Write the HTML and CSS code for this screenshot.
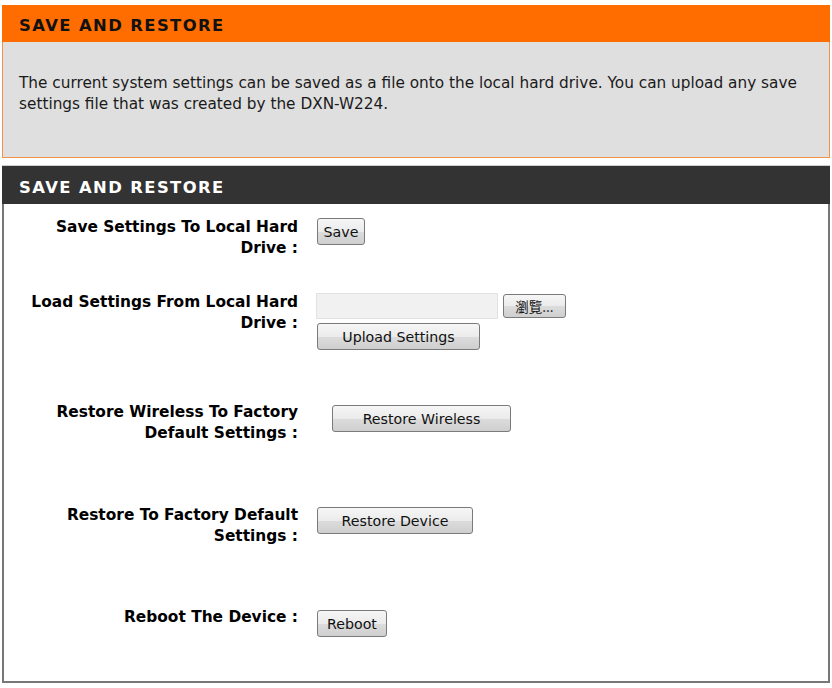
FILE: index.html
```html
<!DOCTYPE html>
<html>
<head>
<meta charset="utf-8">
<link rel="stylesheet" href="styles.css">
</head>
<body>
<div class="page">
  <section class="intro">
    <h1 class="intro-title">SAVE AND RESTORE</h1>
    <div class="intro-body">
      <p>The current system settings can be saved as a file onto the local hard drive. You can upload any save settings file that was created by the DXN-W224.</p>
    </div>
  </section>

  <section class="panel">
    <h2 class="panel-title">SAVE AND RESTORE</h2>
    <div class="panel-body">
      <div class="row row1">
        <div class="label">Save Settings To Local Hard Drive :</div>
        <div class="controls c1"><button class="btn btn-save">Save</button></div>
      </div>
      <div class="row row2">
        <div class="label">Load Settings From Local Hard Drive :</div>
        <div class="controls c2">
          <div class="file-line">
            <input class="file-box" type="text">
            <button class="btn btn-browse">瀏覽...</button>
          </div>
          <button class="btn btn-upload">Upload Settings</button>
        </div>
      </div>
      <div class="row row3">
        <div class="label">Restore Wireless To Factory Default Settings :</div>
        <div class="controls c3"><button class="btn btn-wireless">Restore Wireless</button></div>
      </div>
      <div class="row row4">
        <div class="label">Restore To Factory Default Settings :</div>
        <div class="controls c4"><button class="btn btn-device">Restore Device</button></div>
      </div>
      <div class="row row5">
        <div class="label">Reboot The Device :</div>
        <div class="controls c5"><button class="btn btn-reboot">Reboot</button></div>
      </div>
    </div>
  </section>
</div>
</body>
</html>
```

FILE: styles.css
```css
html, body {
  margin: 0;
  padding: 0;
  background: #ffffff;
}
body {
  font-family: "DejaVu Sans", "Noto Sans CJK TC", sans-serif;
  color: #000;
}
.page {
  width: 828px;
  margin-left: 2px;
  padding-top: 5px;
}
.intro {
  margin: 0;
}
.intro-title {
  margin: 0;
  height: 37px;
  box-sizing: border-box;
  padding-top: 2px;
  background: #ff6d00;
  font-size: 16.4px;
  font-weight: bold;
  letter-spacing: 1.4px;
  line-height: 37px;
  padding-left: 17px;
  color: #111;
}
.intro-body {
  background: #dfdfdf;
  border: 1px solid #f39148;
  border-top: none;
  height: 116px;
  box-sizing: border-box;
  padding: 31px 16px 0 16px;
}
.intro-body p {
  margin: 0;
  font-size: 15.3px;
  line-height: 21px;
  color: #1a1a1a;
}
.panel {
  margin-top: 7px;
  border-top: 1px solid #cfcfcf;
}
.panel-title {
  margin: 0;
  height: 38px;
  box-sizing: border-box;
  padding-top: 3px;
  background: #333333;
  color: #ffffff;
  font-size: 16.4px;
  font-weight: bold;
  letter-spacing: 1.4px;
  line-height: 38px;
  padding-left: 17px;
}
.panel-body {
  border: 2px solid #777777;
  border-top: none;
  height: 479px;
  box-sizing: border-box;
  padding-top: 13px;
}
.row {
  display: flex;
  align-items: flex-start;
}
.row1 { height: 75px; }
.row2 { height: 110px; }
.row3 { height: 103px; }
.row4 { height: 102px; }
.row5 { height: 60px; }
.label {
  width: 294px;
  flex: none;
  text-align: right;
  font-weight: bold;
  font-size: 15.4px;
  line-height: 21px;
  padding-left: 20px;
  box-sizing: border-box;
}
.controls {
  margin-left: 19px;
  display: flex;
  flex-direction: column;
  align-items: flex-start;
}
.c1 { margin-top: 1px; }
.c2 { margin-top: 1px; margin-left: 18px; }
.c3 { margin-top: 3px; margin-left: 34px; }
.c4 { margin-top: 2px; }
.c5 { margin-top: 3px; }
.btn {
  font-family: "DejaVu Sans", "Noto Sans CJK TC", sans-serif;
  font-size: 14.2px;
  color: #111;
  height: 27px;
  padding: 0;
  border: 1px solid #7a7a7a;
  border-radius: 3px;
  background: linear-gradient(#f6f6f6, #ebebeb 50%, #dcdcdc 51%, #cfcfcf);
  text-align: center;
}
.btn-save { width: 48px; }
.btn-upload { width: 163px; margin-left: 1px; margin-top: 4px; }
.btn-wireless { width: 179px; }
.btn-device { width: 156px; }
.btn-reboot { width: 70px; }
.file-line {
  display: flex;
  align-items: center;
}
.file-box {
  width: 182px;
  height: 26px;
  box-sizing: border-box;
  border: 1px solid #e2e2e2;
  background: #f1f1f1;
  margin: 0;
  padding: 0;
}
.btn-browse {
  width: 63px;
  height: 24px;
  margin-left: 5px;
  font-size: 13.5px;
  font-family: "Noto Sans CJK TC", "DejaVu Sans", sans-serif;
  line-height: 20px;
}
```
